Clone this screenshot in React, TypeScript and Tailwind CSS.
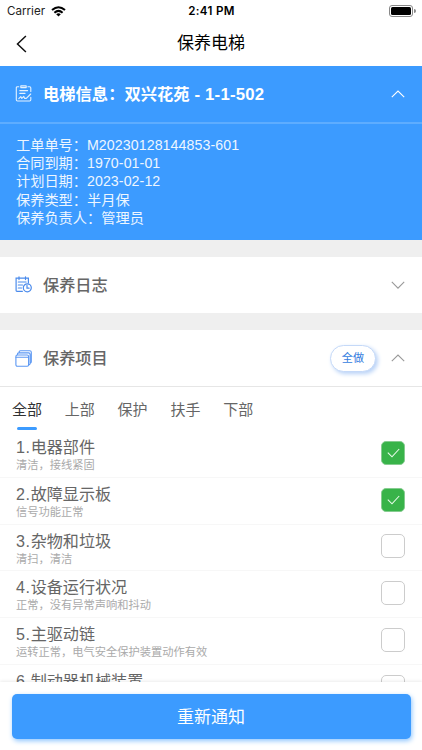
import React from 'react';

const Chevron = ({ up, color }: { up?: boolean; color: string }) => (
  <svg width="14" height="8" viewBox="0 0 14 8" fill="none" stroke={color} strokeWidth="1.1" className="shrink-0">
    <path d={up ? 'M0.8 7.1 7 1.1l6.2 6' : 'M0.8 0.9 7 7.1l6.2-6.2'} />
  </svg>
);

const FormIcon = () => (
  <svg width="17" height="17" viewBox="0 0 17 17" fill="none" stroke="#e4f2ff" strokeWidth="1.1" strokeLinecap="round" strokeLinejoin="round" className="shrink-0">
    <path d="M3.8 1.7H2.5Q1.3 1.7 1.3 2.9v11.9q0 1.2 1.2 1.2h12.1q1.2 0 1.2-1.2v-2.6M12.9 1.7h1.7q1.2 0 1.2 1.2v3.6" />
    <path d="M5.8.9h5.4v1.7H5.8zM4.8 5.6h7.8M4.8 8.4h5.2M3.8 13.6l2-2 1 1.8 2-2 .9 2h1.6l4.4-4.4" />
  </svg>
);

const LogIcon = () => (
  <svg width="17" height="17" viewBox="0 0 17 17" fill="none" stroke="#4b8bec" strokeWidth="1.2" strokeLinecap="round" className="shrink-0">
    <path d="M7.4 15.3H1.9Q1.1 15.3 1.1 14.5V2.2h12.3v4.7M4 .8v2.8M10.5.8v2.8M3.3 6h7.8M3.3 9h4.2M3.3 12h3.2" />
    <circle cx="12.3" cy="11.8" r="4" />
    <path d="M12 9.4v2.8h2.1" />
  </svg>
);

const ProjectIcon = () => (
  <svg width="17" height="17" viewBox="0 0 17 17" fill="none" stroke="#5c98f3" strokeWidth="1.1" strokeLinecap="round" className="shrink-0">
    <rect x=".9" y="5" width="12.7" height="11.2" rx="1.4" />
    <path d="M1 7.3h12.4M2.4 4.6V4.2Q2.4 2.9 3.9 2.9h9.7q1.5 0 1.5 1.5v9.2q0 1.1-1.2 1.3M4.1 2.4Q4.1.8 5.5.8h9.3q1.5 0 1.5 1.5v9.4q0 1.2-1 1.4" />
  </svg>
);

const Wifi = () => (
  <svg width="15" height="11" viewBox="0 0 15 11" fill="none" stroke="#000" strokeWidth="2">
    <path d="M1 4.1Q7.5-1.7 14 4.1M3.4 6.7Q7.5 3 11.6 6.7" />
    <path d="M5.2 8.2Q7.5 6.5 9.8 8.2L7.5 10.6z" fill="#000" stroke="none" />
  </svg>
);

const info = [
  ['工单单号：', 'M20230128144853-601'],
  ['合同到期：', '1970-01-01'],
  ['计划日期：', '2023-02-12'],
  ['保养类型：', '半月保'],
  ['保养负责人：', '管理员'],
];

const items = [
  { no: '1.', title: '电器部件', note: '清洁，接线紧固', done: true },
  { no: '2.', title: '故障显示板', note: '信号功能正常', done: true },
  { no: '3.', title: '杂物和垃圾', note: '清扫，清洁', done: false },
  { no: '4.', title: '设备运行状况', note: '正常，没有异常声响和抖动', done: false },
  { no: '5.', title: '主驱动链', note: '运转正常，电气安全保护装置动作有效', done: false },
  { no: '6.', title: '制动器机械装置', note: '', done: false },
];

export default function App() {
  return (
    <div lang="zh-CN" className="flex h-[750px] w-[422px] flex-col overflow-hidden bg-white font-['Liberation_Sans','Noto_Sans_CJK_SC',sans-serif] text-[#666]">
      <div className="grid h-[22px] shrink-0 grid-cols-3 items-center pl-[7px] pr-[6px] text-black">
        <div className="flex items-center gap-[6px] pt-px font-['Inter'] text-[11.6px] text-[#222]">
          <span>Carrier</span>
          <Wifi />
        </div>
        <div className="pt-px text-center font-['Inter'] text-[11.6px] font-semibold tracking-[0.3px]">2:41 PM</div>
        <div className="flex items-center justify-end gap-px">
          <div className="h-[12px] w-[24px] rounded-[3px] border border-[#888] p-px">
            <div className="h-full w-full rounded-[1.5px] bg-black" />
          </div>
          <div className="h-[4px] w-[1.5px] rounded-r bg-[#888]" />
        </div>
      </div>

      <header className="grid h-[43.5px] shrink-0 grid-cols-3 items-center px-4 text-black">
        <svg width="11" height="18" viewBox="0 0 11 18" fill="none" stroke="#111" strokeWidth="1.5">
          <path d="M9.9 1 1.5 9l8.4 8" />
        </svg>
        <h1 className="text-center text-[17px] leading-none">保养电梯</h1>
      </header>

      <section className="h-[174px] shrink-0 bg-[#3c9bff] text-white">
        <div className="flex h-[58px] items-center border-b-2 border-[#5eadff] pl-[15px] pr-[17px]">
          <FormIcon />
          <h2 className="ml-[11px] grow pt-[2px] text-[16.3px] font-bold leading-none">
            电梯信息：双兴花苑<span className="text-[16.8px] tracking-[0.2px]"> - 1-1-502</span>
          </h2>
          <Chevron up color="#fff" />
        </div>
        <dl className="px-4 pt-[12px] text-[14.2px] leading-[18.4px] text-[#edf6ff]">
          {info.map(([label, value]) => (
            <div key={label} className="flex h-[18.4px]">
              <dt>{label}</dt>
              <dd className="tracking-[0.08px]">{value}</dd>
            </div>
          ))}
        </dl>
      </section>

      <section className="flex h-[73.5px] shrink-0 items-center border-t-[17px] border-[#efefef] pl-[15px] pr-[17px]">
        <LogIcon />
        <h2 className="ml-[11px] grow text-[16.2px] font-medium leading-none">保养日志</h2>
        <Chevron color="#999" />
      </section>

      <section className="flex h-[74px] shrink-0 items-center border-b border-t-[17px] border-b-[#e6e6e6] border-t-[#efefef] pl-[15px] pr-[17px]">
        <ProjectIcon />
        <h2 className="ml-[11px] grow text-[16.2px] font-medium leading-none">保养项目</h2>
        <button className="mr-[15px] h-[27px] w-[46px] rounded-full border border-[#c5d9f8] bg-white pt-[2px] text-[11.2px] leading-none text-[#357de0] shadow-[2px_2px_4px_#b8d2f7]">全做</button>
        <Chevron up color="#999" />
      </section>

      <nav className="flex h-[44px] shrink-0 gap-[22.8px] pl-3 text-[15px] leading-none">
        {['全部', '上部', '保护', '扶手', '下部'].map((tab, i) => (
          <div key={tab} className={`flex w-[30px] flex-col items-center pt-[15px] ${i === 0 ? 'text-[#303133]' : 'text-[#666]'}`}>
            <span>{tab}</span>
            {i === 0 && <span className="mt-[10px] h-[3px] w-5 rounded-full bg-[#3c9bff]" />}
          </div>
        ))}
      </nav>

      <ul className="min-h-0 grow overflow-hidden">
        {items.map((item) => (
          <li key={item.no} className="flex h-[46.8px] items-center justify-between border-b border-[#f7f7f7] pl-4 pr-[17px]">
            <div className="flex h-full flex-col">
              <span className="mt-[7px] text-[16.1px] leading-[18px]">
                <span className="tracking-[0.6px]">{item.no}</span>
                {item.title}
              </span>
              <span className="mt-[3px] text-[11.25px] leading-[13px] text-[#aaa]">{item.note}</span>
            </div>
            <span className={`mb-[2px] flex size-6 shrink-0 items-center justify-center rounded-[5px] border ${item.done ? 'border-[#86cc90] bg-[#38b349]' : 'border-[#ccc] bg-white'}`}>
              {item.done && (
                <svg width="13" height="10" viewBox="0 0 13 10" fill="none" stroke="#e8fbea" strokeWidth="1.1">
                  <path d="M.8 4.6 5 8.8 12.2 1" />
                </svg>
              )}
            </span>
          </li>
        ))}
      </ul>

      <footer className="z-10 h-[68px] shrink-0 bg-white pl-[11.5px] pt-[11.5px] shadow-[0_-1px_3px_rgba(0,0,0,0.08)]">
        <button className="block h-[45px] w-[399px] rounded-[5px] bg-[#3c9bff] pt-[3px] text-[17px] leading-none text-white shadow-[1px_2px_5px_#8fc6ff]">重新通知</button>
      </footer>
    </div>
  );
}
